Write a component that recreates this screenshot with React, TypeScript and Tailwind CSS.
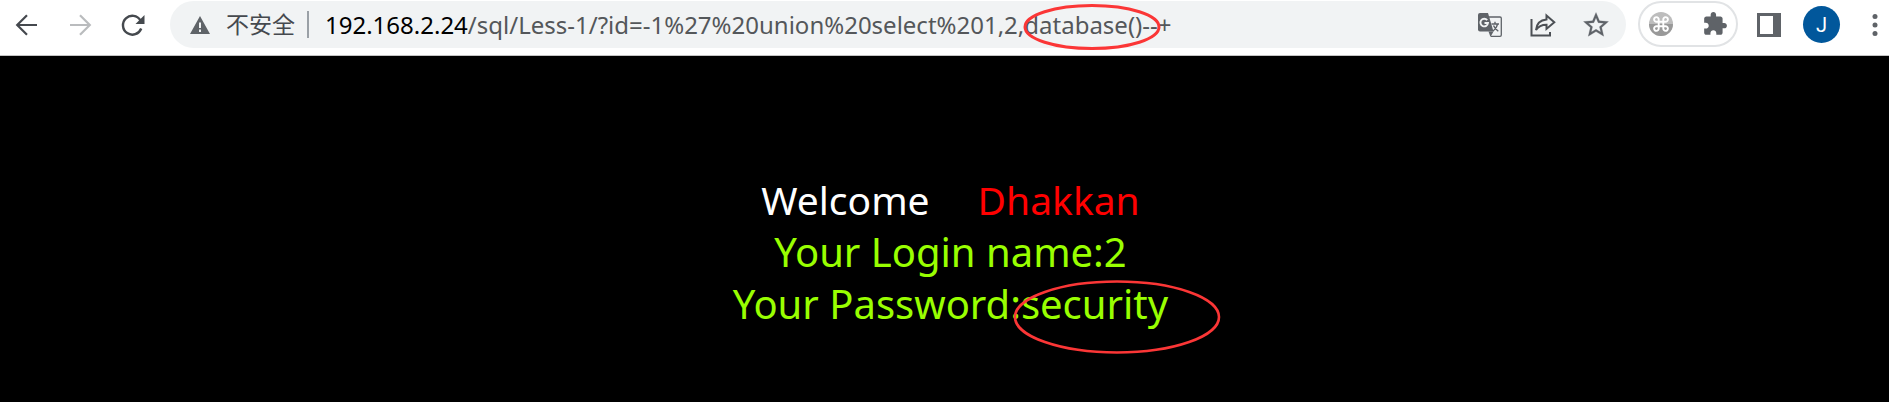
import React from "react";

function IconButton({ label, className = "w-8", children }: { label: string; className?: string; children: React.ReactNode }) {
  return (
    <button type="button" aria-label={label} className={`flex h-8 shrink-0 items-center justify-center ${className}`}>
      {children}
    </button>
  );
}

function Toolbar() {
  return (
    <header className="flex h-14 items-start border-b border-[#c4c4c4] bg-white pt-px pl-[11px] text-[#5f6368]">
      <nav aria-label="History" className="flex h-[47px] shrink-0 items-center gap-[21px]">
        <IconButton label="Back" className="w-8 text-[#45494e]">
          <svg viewBox="0 0 24 24" className="h-6 w-6" fill="none" stroke="currentColor" strokeWidth="2.200">
            <path d="M22 12H2.500M12 2.200L2.200 12l9.800 9.800" />
          </svg>
        </IconButton>
        <IconButton label="Forward" className="w-8 text-[#babcbe]">
          <svg viewBox="0 0 24 24" className="h-6 w-6" fill="none" stroke="currentColor" strokeWidth="2.200">
            <path d="M2 12h19.500M12 2.200l9.800 9.800-9.800 9.800" />
          </svg>
        </IconButton>
        <IconButton label="Reload" className="w-8 text-[#45494e]">
          <svg viewBox="0 0 24 24" className="h-6 w-6" fill="none" aria-hidden="true">
            <path d="M20.200 15.500A9.400 9.400 0 1 1 19.500 7.500" stroke="currentColor" strokeWidth="2.400" />
            <path d="M23.500 2v9H14.500z" fill="currentColor" />
          </svg>
        </IconButton>
      </nav>

      <form className="relative ml-[21px] flex h-[47px] min-w-0 flex-1 items-center rounded-full bg-[#f1f3f4] pr-[14px] pl-5 font-['Noto_Sans','Noto_Sans_CJK_SC',sans-serif] text-2xl">
        <svg viewBox="0 0 20 18" className="h-[18px] w-5 shrink-0" fill="currentColor" aria-hidden="true">
          <path fillRule="evenodd" d="M10 0L20 18H0L10 0zM9 6.500V12h2V6.500H9zM9 13.500v2.500h2v-2.500H9z" />
        </svg>
        <span className="ml-4 shrink-0 text-[23px] text-[#45494e]">不安全</span>
        <span className="mr-4 ml-3 h-[27px] w-0.5 shrink-0 bg-[#9aa0a6]" />
        <label htmlFor="address" className="shrink-0 text-black">192.168.2.24</label>
        <input
          id="address"
          type="text"
          defaultValue="/sql/Less-1/?id=-1%27%20union%20select%201,2,database()--+"
          className="min-w-0 flex-1 bg-transparent text-[#54575a] outline-none"
        />
        <svg viewBox="0 0 138 46" className="pointer-events-none absolute top-[3px] left-[853px] h-[46px] w-[138px]" fill="none" aria-hidden="true">
          <ellipse cx="69" cy="23" rx="67" ry="21.500" stroke="#fb3636" strokeWidth="3" />
        </svg>
        <div className="flex shrink-0 items-center gap-[21px]">
          <IconButton label="Translate">
            <svg viewBox="0 0 24 24" className="h-6 w-6">
              <path d="M10 4h12a1.300 1.300 0 0 1 1.300 1.300v16.700a1.300 1.300 0 0 1-1.300 1.300H13" fill="none" stroke="currentColor" strokeWidth="1.300" />
              <path d="M2 0h8l5.500 18.500H2a2 2 0 0 1-2-2V2a2 2 0 0 1 2-2z" fill="currentColor" />
              <path d="M12.500 24l-2-5.500h5z" fill="currentColor" />
              <path d="M9.200 7.200A3.800 3.800 0 1 0 10 10H6.500" fill="none" stroke="#f1f3f4" strokeWidth="1.900" />
              <path d="M13.500 11h7.500M17 8.800v2.200M19.500 11c-.5 3-2.500 5.500-4.500 7M15.500 12.500c1 2.500 2.500 4 4.800 5.700" fill="none" stroke="currentColor" strokeWidth="1.400" />
            </svg>
          </IconButton>
          <IconButton label="Share" className="w-8 text-[#4c5055]">
            <svg viewBox="0 0 26 24" className="h-6 w-[26px]" fill="none" stroke="currentColor" strokeWidth="2">
              <path d="M1.500 6v16.500H20V19" />
              <path d="M16.500 2.500l7.800 6.700-7.800 6.700v-4.200c-5 0-8 1.300-10.500 5.300C6.500 11 10 7 16.500 6.400z" />
            </svg>
          </IconButton>
          <IconButton label="Bookmark">
            <svg viewBox="0 0 24 24" className="h-[30px] w-[30px]" fill="currentColor" stroke="currentColor" strokeWidth="0.200">
              <path d="M22 9.240l-7.190-.62L12 2 9.190 8.630 2 9.240l5.460 4.730L5.820 21 12 17.270 18.180 21l-1.630-7.030L22 9.240zM12 15.400l-3.760 2.270 1-4.280-3.320-2.880 4.380-.38L12 6.100l1.710 4.040 4.380.38-3.320 2.880 1 4.280L12 15.400z" />
            </svg>
          </IconButton>
        </div>
      </form>

      <div className="ml-3 flex h-[46px] w-[100px] shrink-0 items-center justify-between rounded-full border-2 border-[#e1e3e5] px-[5px]">
        <IconButton label="Shortcut extension">
          <svg viewBox="0 0 24 24" className="h-6 w-6">
            <circle cx="12" cy="12" r="12" fill="#bdbdbd" />
            <path d="M0 12h24a12 12 0 0 1-24 0z" fill="#999999" />
            <path d="M9.700 9.700h4.600v4.600H9.700zM9.700 9.700H7.500a2.300 2.300 0 1 1 2.200-2.200zM14.300 9.700V7.500a2.300 2.300 0 1 1 2.200 2.200zM14.300 14.300h2.200a2.300 2.300 0 1 1-2.200 2.200zM9.700 14.300v2.200a2.300 2.300 0 1 1-2.200-2.200z" fill="none" stroke="#fff" strokeWidth="1.900" />
          </svg>
        </IconButton>
        <IconButton label="Extensions">
          <svg viewBox="0 0 24 24" className="h-[26px] w-[26px]" fill="currentColor">
            <path d="M20.500 11H19V7c0-1.100-.9-2-2-2h-4V3.500C13 2.120 11.880 1 10.500 1S8 2.120 8 3.500V5H4c-1.100 0-1.990.9-1.990 2v3.800H3.500c1.490 0 2.700 1.210 2.700 2.700s-1.210 2.700-2.700 2.700H2V20c0 1.100.9 2 2 2h3.800v-1.500c0-1.490 1.210-2.700 2.700-2.700 1.490 0 2.700 1.210 2.700 2.700V22H17c1.100 0 2-.9 2-2v-4h1.500c1.380 0 2.500-1.120 2.500-2.500S21.880 11 20.500 11z" />
          </svg>
        </IconButton>
      </div>

      <div className="flex h-[47px] shrink-0 items-center">
        <IconButton label="Side panel" className="ml-[15px] w-8">
          <svg viewBox="0 0 24 24" className="h-6 w-6" fill="currentColor">
            <path fillRule="evenodd" d="M0 0h24v24H0zM3 3v18h13V3z" />
          </svg>
        </IconButton>
        <button type="button" aria-label="Profile" className="ml-[18px] flex h-[37px] w-[37px] items-center justify-center rounded-full bg-[#01579b] font-['Roboto',sans-serif] text-xl text-white">
          J
        </button>
        <IconButton label="Menu" className="ml-[21px] w-7">
          <svg viewBox="0 0 6 24" className="h-6 w-[6px]" fill="currentColor">
            <circle cx="3" cy="3.500" r="2.500" />
            <circle cx="3" cy="12" r="2.500" />
            <circle cx="3" cy="20.500" r="2.500" />
          </svg>
        </IconButton>
      </div>
    </header>
  );
}

export default function App() {
  return (
    <div className="flex min-h-screen flex-col overflow-hidden bg-black">
      <Toolbar />
      <main className="flex-1 pt-[118px] pl-3 text-center font-['Noto_Sans',sans-serif] text-[40px] leading-[52px] text-[#99ff00]">
        <p className="flex justify-center gap-12 text-[39px]">
          <span className="text-white">Welcome</span>
          <span className="text-[#ff0000]">Dhakkan</span>
        </p>
        <p>Your Login name:2</p>
        <p>
          Your Password:
          <span className="relative">
            security
            <svg viewBox="0 0 208 74" className="pointer-events-none absolute top-[4px] -left-[8px] h-[74px] w-[208px]" fill="none" aria-hidden="true">
              <ellipse cx="104" cy="37" rx="102" ry="35.500" stroke="#fb3636" strokeWidth="2.600" />
            </svg>
          </span>
        </p>
      </main>
    </div>
  );
}
